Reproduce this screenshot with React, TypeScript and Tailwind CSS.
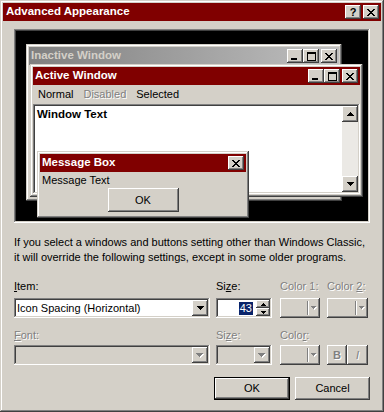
import React from "react";

const WIN =
  "shadow-[inset_-1px_-1px_#404040,inset_1px_1px_#d4d0c8,inset_-2px_-2px_#808080,inset_2px_2px_#ffffff]";
const BTN =
  "shadow-[inset_-1px_-1px_#404040,inset_1px_1px_#ffffff,inset_-2px_-2px_#808080,inset_2px_2px_#d4d0c8]";
const SUNK =
  "shadow-[inset_-1px_-1px_#ffffff,inset_1px_1px_#808080,inset_-2px_-2px_#d4d0c8,inset_2px_2px_#404040]";
const DIS = "text-[#808080] [text-shadow:1px_1px_0_#ffffff]";

const X_ROWS = ["##....##", ".##..##.", "..####..", "...##...", "..####..", ".##..##.", "##....##"];
const MIN_ROWS = ["######", "######"];
const MAX_ROWS = [
  "#########",
  "#########",
  "#.......#",
  "#.......#",
  "#.......#",
  "#.......#",
  "#.......#",
  "#.......#",
  "#########",
];
const UP_ROWS = ["...#...", "..###..", ".#####.", "#######"];
const DOWN_ROWS = ["#######", ".#####.", "..###..", "...#..."];
const SPIN_UP = ["..#..", ".###.", "#####"];
const SPIN_DOWN = ["#####", ".###.", "..#.."];
const SMALL_DOWN = ["#####", ".###.", "..#.."];

function Px({ rows, color = "#000000", shadow }: { rows: string[]; color?: string; shadow?: string }) {
  const h = rows.length;
  const w = rows[0].length;
  const pts: [number, number][] = [];
  rows.forEach((r, y) =>
    r.split("").forEach((c, x) => {
      if (c === "#") pts.push([x, y]);
    })
  );
  const W = shadow ? w + 1 : w;
  const H = shadow ? h + 1 : h;
  return (
    <svg width={W} height={H} shapeRendering="crispEdges" className="block">
      {shadow &&
        pts.map(([x, y]) => <rect key={`s${x}-${y}`} x={x + 1} y={y + 1} width={1} height={1} fill={shadow} />)}
      {pts.map(([x, y]) => (
        <rect key={`p${x}-${y}`} x={x} y={y} width={1} height={1} fill={color} />
      ))}
    </svg>
  );
}

function CapBtn({ children, className = "" }: { children: React.ReactNode; className?: string }) {
  return (
    <div className={`w-[16px] h-[14px] bg-[#d4d0c8] ${BTN} flex items-center justify-center ${className}`}>
      {children}
    </div>
  );
}

function CapButtons() {
  return (
    <div className="ml-auto flex items-center">
      <CapBtn>
        <div className="mt-[5px] mr-[2px]">
          <Px rows={MIN_ROWS} />
        </div>
      </CapBtn>
      <CapBtn>
        <Px rows={MAX_ROWS} />
      </CapBtn>
      <CapBtn className="ml-[2px]">
        <Px rows={X_ROWS} />
      </CapBtn>
    </div>
  );
}

function ComboArrow({ disabled }: { disabled?: boolean }) {
  return (
    <div className={`w-[16px] h-[16px] bg-[#d4d0c8] ${BTN} flex items-center justify-center`}>
      {disabled ? <Px rows={DOWN_ROWS} color="#808080" shadow="#ffffff" /> : <Px rows={DOWN_ROWS} />}
    </div>
  );
}

function ColorBtn({ w }: { w: string }) {
  return (
    <div className={`${w} h-[20px] bg-[#d4d0c8] ${BTN} flex items-stretch p-[2px]`}>
      <div className="flex-1" />
      <div className="my-[1px] flex">
        <div className="w-[1px] bg-[#808080]" />
        <div className="w-[1px] bg-[#ffffff]" />
      </div>
      <div className="w-[9px] flex items-center justify-center">
        <Px rows={SMALL_DOWN} color="#808080" shadow="#ffffff" />
      </div>
    </div>
  );
}

export default function App() {
  return (
    <div
      className={`w-[384px] h-[412px] bg-[#d4d0c8] ${WIN} p-[3px] flex flex-col font-['Liberation_Sans',Arial,sans-serif] text-[11px] text-black`}
    >
      {/* Title bar */}
      <div className="h-[18px] bg-[#800000] flex items-center pl-[3px] pr-[2px] shrink-0">
        <span className="text-white font-bold text-[11.5px] leading-none">Advanced Appearance</span>
        <div className="ml-auto flex gap-[2px]">
          <CapBtn>
            <span className="font-bold text-[11px] leading-none">?</span>
          </CapBtn>
          <CapBtn>
            <Px rows={X_ROWS} />
          </CapBtn>
        </div>
      </div>

      <div className="flex-1 flex flex-col px-[11px] pt-[8px]">
        {/* Preview */}
        <div className={`relative w-[356px] h-[194px] bg-black ${SUNK} shrink-0`}>
          {/* Inactive window */}
          <div className={`absolute left-[12px] top-[15px] w-[316px] h-[157px] bg-[#d4d0c8] ${WIN} p-[3px]`}>
            <div className="h-[18px] bg-linear-to-r from-[#808080] to-[#c0c0c0] flex items-center pl-[2px] pr-[2px]">
              <span className="text-[#d4d0c8] font-bold text-[11.5px] leading-none">Inactive Window</span>
              <CapButtons />
            </div>
          </div>

          {/* Active window */}
          <div
            className={`absolute left-[16px] top-[35px] w-[333px] h-[133px] bg-[#d4d0c8] ${WIN} p-[3px] flex flex-col`}
          >
            <div className="h-[18px] bg-[#800000] flex items-center pl-[2px] pr-[2px] shrink-0">
              <span className="text-white font-bold text-[11.5px] leading-none">Active Window</span>
              <CapButtons />
            </div>
            <div className="h-[19px] flex items-center shrink-0">
              <span className="px-[5px]">Normal</span>
              <span className={`px-[5px] ${DIS}`}>Disabled</span>
              <span className="px-[5px]">Selected</span>
            </div>
            <div className={`flex-1 bg-white ${SUNK} p-[2px] flex`}>
              <div className="flex-1 pl-[2px] pt-[2px] font-bold text-[11.5px] leading-[13px]">Window Text</div>
              <div className="w-[16px] flex flex-col">
                <div className={`h-[16px] bg-[#d4d0c8] ${BTN} flex items-center justify-center`}>
                  <Px rows={UP_ROWS} />
                </div>
                <div className="flex-1 bg-[#ebe9e5]" />
                <div className={`h-[16px] bg-[#d4d0c8] ${BTN} flex items-center justify-center`}>
                  <Px rows={DOWN_ROWS} />
                </div>
              </div>
            </div>
          </div>

          {/* Message box */}
          <div
            className={`absolute left-[23px] top-[122px] w-[212px] h-[67px] bg-[#d4d0c8] ${WIN} p-[3px] flex flex-col`}
          >
            <div className="h-[18px] bg-[#800000] flex items-center pl-[2px] pr-[2px] shrink-0">
              <span className="text-white font-bold text-[11.5px] leading-none">Message Box</span>
              <CapBtn className="ml-auto">
                <Px rows={X_ROWS} />
              </CapBtn>
            </div>
            <div className="h-[16px] pl-[2px] leading-[16px]">Message Text</div>
            <div className="flex justify-center">
              <div className={`w-[71px] h-[24px] bg-[#d4d0c8] ${BTN} flex items-center justify-center`}>OK</div>
            </div>
          </div>
        </div>

        {/* Explanation */}
        <p className="mt-[12px] leading-[15px]">
          If you select a windows and buttons setting other than Windows Classic,
          <br />
          it will override the following settings, except in some older programs.
        </p>

        {/* Item row */}
        <div className="mt-[15px] flex">
          <div className="w-[196px] flex flex-col">
            <div className="leading-[13px] mb-[5px]">
              <u className="underline-offset-[1px]">I</u>tem:
            </div>
            <div className={`h-[20px] bg-white ${SUNK} p-[2px] flex items-center`}>
              <span className="flex-1 pl-[1px]">Icon Spacing (Horizontal)</span>
              <ComboArrow />
            </div>
          </div>
          <div className="w-[56px] ml-[6px] flex flex-col">
            <div className="leading-[13px] mb-[5px]">
              Si<u className="underline-offset-[1px]">z</u>e:
            </div>
            <div className={`h-[20px] bg-white ${SUNK} p-[2px] flex`}>
              <div className="flex-1 flex items-center justify-end pr-[3px]">
                <span className="bg-[#0a246a] text-white px-[1px] leading-[13px]">43</span>
              </div>
              <div className="w-[14px] flex flex-col">
                <div className={`h-[8px] bg-[#d4d0c8] ${BTN} flex items-center justify-center`}>
                  <Px rows={SPIN_UP} />
                </div>
                <div className={`h-[8px] bg-[#d4d0c8] ${BTN} flex items-center justify-center`}>
                  <Px rows={SPIN_DOWN} />
                </div>
              </div>
            </div>
          </div>
          <div className="w-[40px] ml-[8px] flex flex-col">
            <div className={`leading-[13px] mb-[5px] whitespace-nowrap ${DIS}`}>Color 1:</div>
            <ColorBtn w="w-[40px]" />
          </div>
          <div className="w-[41px] ml-[7px] flex flex-col">
            <div className={`leading-[13px] mb-[5px] whitespace-nowrap ${DIS}`}>
              Color <u className="underline-offset-[1px]">2</u>:
            </div>
            <ColorBtn w="w-[41px]" />
          </div>
        </div>

        {/* Font row */}
        <div className="mt-[11px] flex">
          <div className="w-[196px] flex flex-col">
            <div className={`leading-[13px] mb-[3px] ${DIS}`}>
              <u className="underline-offset-[1px]">F</u>ont:
            </div>
            <div className={`h-[20px] bg-[#d4d0c8] ${SUNK} p-[2px] flex items-center justify-end`}>
              <ComboArrow disabled />
            </div>
          </div>
          <div className="w-[56px] ml-[6px] flex flex-col">
            <div className={`leading-[13px] mb-[3px] ${DIS}`}>
              Si<u className="underline-offset-[1px]">z</u>e:
            </div>
            <div className={`h-[20px] bg-[#d4d0c8] ${SUNK} p-[2px] flex items-center justify-end`}>
              <ComboArrow disabled />
            </div>
          </div>
          <div className="w-[40px] ml-[8px] flex flex-col">
            <div className={`leading-[13px] mb-[3px] whitespace-nowrap ${DIS}`}>
              Colo<u className="underline-offset-[1px]">r</u>:
            </div>
            <ColorBtn w="w-[40px]" />
          </div>
          <div className="ml-[7px] flex flex-col">
            <div className="h-[13px] mb-[3px]" />
            <div className="flex">
              <div
                className={`w-[20px] h-[20px] bg-[#d4d0c8] ${BTN} flex items-center justify-center font-bold ${DIS}`}
              >
                B
              </div>
              <div className={`w-[21px] h-[20px] bg-[#d4d0c8] ${BTN} flex items-center justify-center italic ${DIS}`}>
                I
              </div>
            </div>
          </div>
        </div>

        {/* OK / Cancel */}
        <div className="mt-[12px] flex justify-end gap-[5px]">
          <div className="w-[76px] h-[23px] border border-black">
            <div className={`w-full h-full bg-[#d4d0c8] ${BTN} flex items-center justify-center`}>OK</div>
          </div>
          <div className={`w-[75px] h-[23px] bg-[#d4d0c8] ${BTN} flex items-center justify-center`}>Cancel</div>
        </div>
      </div>
    </div>
  );
}
